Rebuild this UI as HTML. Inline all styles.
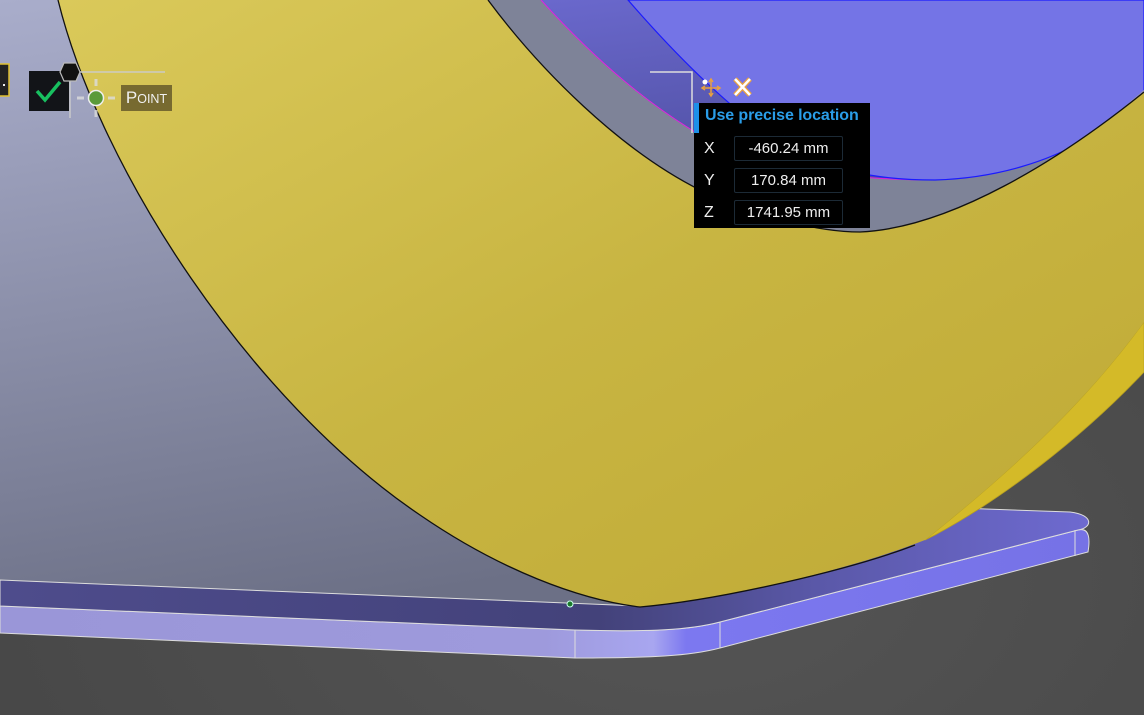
<!DOCTYPE html>
<html><head><meta charset="utf-8"><style>
html,body{margin:0;padding:0;width:1144px;height:715px;overflow:hidden;background:#484848;font-family:"Liberation Sans",sans-serif}
svg{position:absolute;left:0;top:0}
.panel{position:absolute;left:694px;top:103px;width:176px;height:125px;background:#000}
.bar{position:absolute;left:0;top:0;width:5px;height:30px;background:#1e90e8}
.title{position:absolute;left:11px;top:4px;color:#2a9de8;font-size:16px;font-weight:bold;letter-spacing:-0.1px}
.lab{position:absolute;left:10px;color:#eee;font-size:16px}
.inp{position:absolute;left:40px;width:107px;height:23px;border:1px solid #1c2a36;border-radius:2px;color:#eee;font-size:15px;line-height:23px;text-align:center}
.pt{position:absolute;left:121px;top:85px;width:51px;height:26px;background:#776a30;color:#f0f0f0;font-family:"Liberation Sans",sans-serif;font-size:17px;line-height:26px;text-align:center}
.pt small{font-size:12.5px}
</style></head><body>
<svg width="1144" height="715" viewBox="0 0 1144 715">
<defs>
<radialGradient id="fl" cx="0.6" cy="0.8" r="0.8"><stop offset="0" stop-color="#555"/><stop offset="1" stop-color="#444"/></radialGradient>
<linearGradient id="bg" x1="0" y1="0" x2="0.3" y2="1"><stop offset="0" stop-color="#a9adcb"/><stop offset="1" stop-color="#6c7086"/></linearGradient>
<linearGradient id="yl" x1="0" y1="0" x2="1" y2="1"><stop offset="0" stop-color="#dac95a"/><stop offset="0.5" stop-color="#c8b542"/><stop offset="1" stop-color="#bfa935"/></linearGradient>
<linearGradient id="tp" x1="0" y1="0" x2="1" y2="0"><stop offset="0" stop-color="#4e4c8c"/><stop offset="0.55" stop-color="#43427a"/><stop offset="0.75" stop-color="#5a58a8"/><stop offset="1" stop-color="#6e6ad0"/></linearGradient>
<linearGradient id="fr" x1="0" y1="0" x2="1" y2="0"><stop offset="0" stop-color="#9a96d8"/><stop offset="0.5" stop-color="#9e9adc"/><stop offset="0.6" stop-color="#a8a6f0"/><stop offset="0.63" stop-color="#7c78f0"/><stop offset="1" stop-color="#7672e6"/></linearGradient>
<linearGradient id="db" x1="0" y1="0" x2="0.4" y2="1"><stop offset="0" stop-color="#6a68cc"/><stop offset="1" stop-color="#4e4ea0"/></linearGradient>
</defs>
<rect width="1144" height="715" fill="url(#fl)"/>
<path d="M0,0 L1144,0 L1144,372 C1080,430 1000,500 925,540 L640,607 L0,581 Z" fill="url(#bg)"/>
<path d="M488,0 C540,70 620,150 700,190 C760,218 820,232 860,232 C950,228 1060,160 1144,92 L1144,0 Z" fill="#7e8398"/>
<!-- plate -->
<path d="M0,606 L575,630 C650,632 690,630 720,622 L1078,530 C1090,527 1090,540 1088,552 L720,648 C690,656 650,658 575,658 L0,633 Z" fill="url(#fr)" stroke="#ddd" stroke-width="1"/>
<path d="M0,580 L640,606 L930,507 L1070,512 C1095,515 1092,528 1078,530 L720,622 C690,630 650,632 575,630 L0,606 Z" fill="url(#tp)" stroke="#ddd" stroke-width="1"/>
<line x1="575" y1="630" x2="575" y2="658" stroke="#ddd"/><line x1="720" y1="622" x2="720" y2="648" stroke="#ddd"/><line x1="1075" y1="530" x2="1075" y2="556" stroke="#ddd"/>
<!-- blue -->
<path d="M541,0 C600,65 650,105 700,135 C770,170 850,180 935,180 L1144,100 L1144,0 Z" fill="url(#db)"/>
<path d="M541,0 C600,65 650,105 700,135 C770,170 850,180 935,180" fill="none" stroke="#e020e0" stroke-width="1"/>
<path d="M628,0 C680,60 740,120 800,155 C850,175 890,180 935,180 C1000,178 1050,160 1085,140 L1144,100 L1144,0 Z" fill="#7474e6" stroke="#1a1aff" stroke-width="1.2"/>
<path d="M1085,140 L1144,90 L1144,110 Z" fill="#9a98b8"/>
<!-- yellow rim -->
<path d="M925,540 C1000,480 1080,410 1144,322 L1144,372 C1080,440 1000,500 935,535 Z" fill="#d4ba28" stroke="#b8a020" stroke-width="0.8"/>
<!-- yellow face -->
<path d="M58,0 C100,170 250,400 420,515 C500,570 580,600 640,607 C720,600 850,570 925,540 C1000,480 1080,410 1144,322 L1144,92 C1060,160 950,228 860,232 C820,232 760,218 700,190 C620,150 540,70 488,0 Z" fill="url(#yl)"/>
<path d="M58,0 C100,170 250,400 420,515 C500,570 580,600 640,607 C720,600 850,570 915,545" fill="none" stroke="#111" stroke-width="1.3"/>
<path d="M1144,92 C1060,160 950,228 860,232 C820,232 760,218 700,190 C620,150 540,70 488,0" fill="none" stroke="#111" stroke-width="1.3"/>
<circle cx="570" cy="604" r="3" fill="#1a7a2a" stroke="#cfe" stroke-width="1"/>
<!-- widget -->
<rect x="-2" y="64" width="11" height="32" fill="#222" stroke="#e0c030" stroke-width="1.5"/>
<rect x="3" y="84" width="2" height="2" fill="#eee"/>
<rect x="29" y="71" width="40" height="40" fill="#121418"/>
<path d="M37,91 L45,100 L60,82" fill="none" stroke="#18c060" stroke-width="3.5"/>
<line x1="78" y1="72" x2="165" y2="72" stroke="#ccc" stroke-width="2" opacity="0.7"/>
<line x1="70" y1="80" x2="70" y2="118" stroke="#ccc" stroke-width="2" opacity="0.7"/>
<polygon points="64,63 76,63 80,72 76,81 64,81 60,72" fill="#111" stroke="#bbb" stroke-width="1.2"/>
<g stroke="#ddd" stroke-width="3" opacity="0.8"><line x1="77" y1="98" x2="84" y2="98"/><line x1="108" y1="98" x2="115" y2="98"/><line x1="96" y1="79" x2="96" y2="86"/><line x1="96" y1="110" x2="96" y2="117"/></g>
<circle cx="96" cy="98" r="7.5" fill="#5a9a38" stroke="#eee" stroke-width="1.5"/>
<!-- panel lead -->
<path d="M650,72 L692,72 L692,133" fill="none" stroke="#ddd" stroke-width="1.5"/>
<g stroke="#e8a040" stroke-width="1.5" fill="none"><line x1="711" y1="80" x2="711" y2="95"/><line x1="703" y1="88" x2="719" y2="88"/><path d="M709,82 L711,79 L713,82 M709,93 L711,96 L713,93 M705,86 L702,88 L705,90 M717,86 L720,88 L717,90"/></g>
<circle cx="705" cy="82" r="2.5" fill="#fff"/>
<path d="M735,79 L750,95 M750,79 L735,95" stroke="#e8a040" stroke-width="5"/>
<path d="M735,79 L750,95 M750,79 L735,95" stroke="#fff" stroke-width="2.5"/>
</svg>
<div class="pt">P<small>OINT</small></div>
<div class="panel"><div class="bar"></div><div class="title">Use precise location</div>
<div class="lab" style="top:37px">X</div><div class="inp" style="top:33px">-460.24 mm</div>
<div class="lab" style="top:69px">Y</div><div class="inp" style="top:65px">170.84 mm</div>
<div class="lab" style="top:101px">Z</div><div class="inp" style="top:97px">1741.95 mm</div>
</div>
</body></html>
